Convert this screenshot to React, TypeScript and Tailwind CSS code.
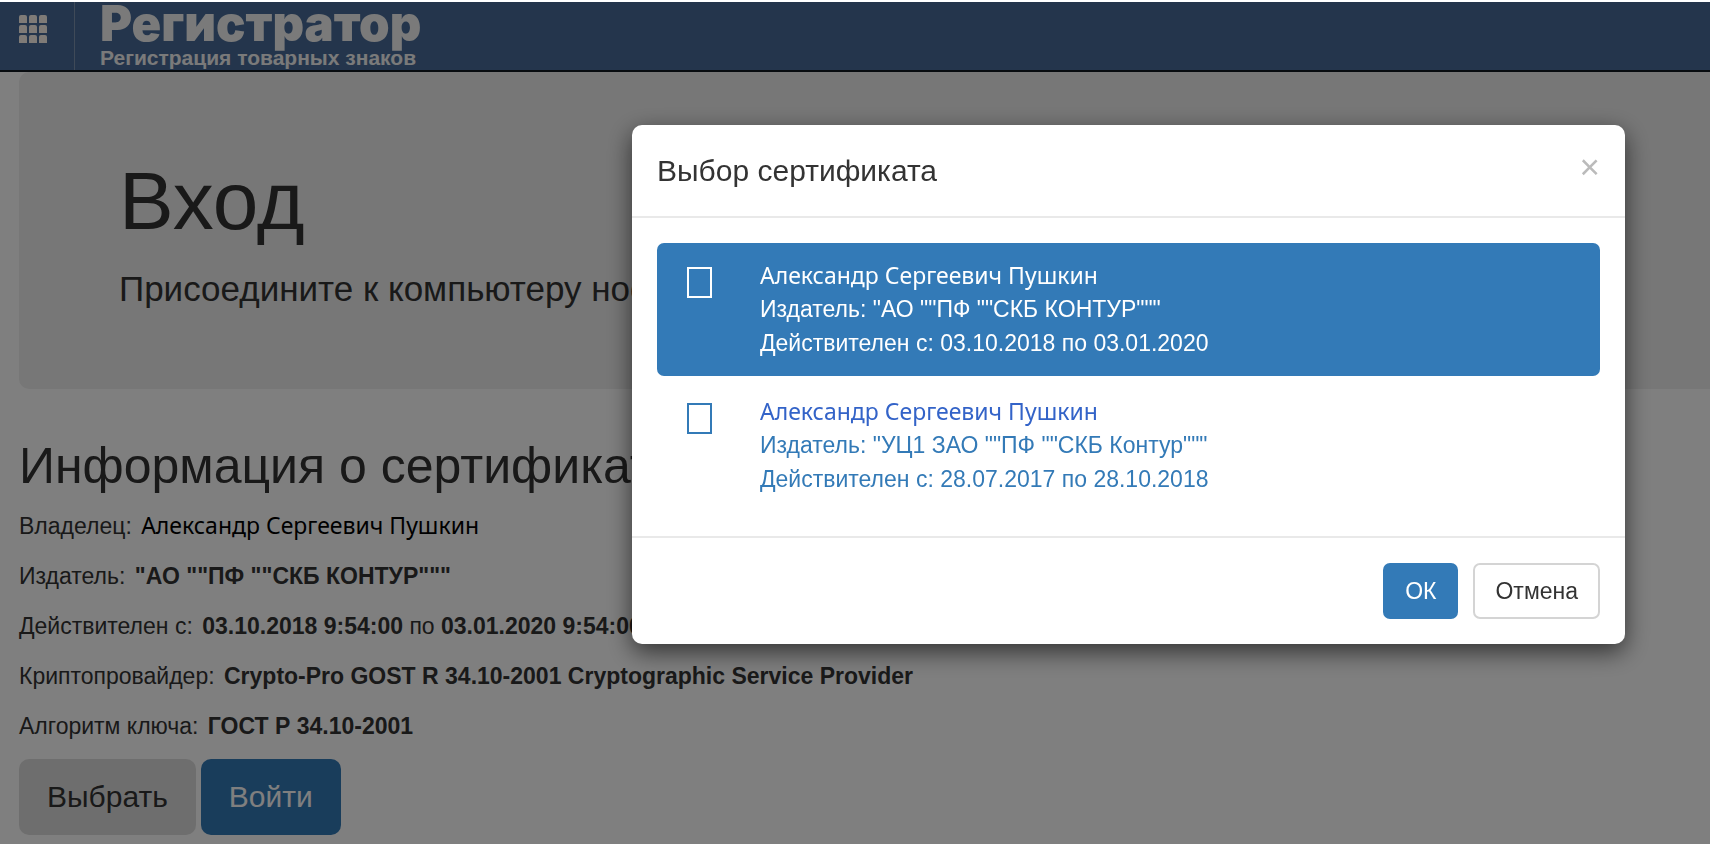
import React from 'react';

interface Certificate {
  id: number;
  owner: string;
  issuer: string;
  from: string;
  to: string;
}

const certificates: Certificate[] = [
  { id: 1, owner: 'Александр Сергеевич Пушкин', issuer: '"АО ""ПФ ""СКБ КОНТУР"""', from: '03.10.2018', to: '03.01.2020' },
  { id: 2, owner: 'Александр Сергеевич Пушкин', issuer: '"УЦ1 ЗАО ""ПФ ""СКБ Контур"""', from: '28.07.2017', to: '28.10.2018' },
];

const GridIcon: React.FC = (): JSX.Element => (
  <svg viewBox="0 0 28 28" className="w-7 h-7" fill="#fff6ee">
    {[0, 10, 20].map((y) =>
      [0, 10, 20].map((x) => (
        <path key={`${x}-${y}`} d={`M${x} ${y + 8}v-6q0-2 2-2h4q2 0 2 2v6z`} />
      ))
    )}
  </svg>
);

const Header: React.FC = (): JSX.Element => (
  <header className="flex h-[70px] mt-[2px] border-b-2 border-[#101820] bg-[#486b98]">
    <button type="button" aria-label="Меню" className="w-[75px] shrink-0 pl-[19px] pt-[13px] flex items-start border-r border-[#7f95b0]">
      <GridIcon />
    </button>
    <a href="#" className="flex flex-col pl-[25px] text-[#f4f4f4] font-bold">
      <span className="font-[Inter,sans-serif] text-[49px] leading-[44px] font-black">Регистратор</span>
      <span className="text-[21px] leading-[24px]">Регистрация товарных знаков</span>
    </a>
  </header>
);

const CertificateDialog: React.FC = (): JSX.Element => {
  const [selected, setSelected] = React.useState<number>(1);

  return (
    <div className="fixed inset-x-0 bottom-0 top-[2px] bg-black/50">
      <div
        role="dialog"
        aria-labelledby="dialog-title"
        className="w-[993px] ml-auto mr-[85px] mt-[123px] rounded-[10px] bg-white shadow-[0_8px_25px_rgba(0,0,0,0.6)]"
      >
        <div className="flex items-start justify-between px-[25px] pt-[24px] h-[93px] border-b-2 border-[#e9e9e9]">
          <h4 id="dialog-title" className="text-[30px] leading-[43px]">Выбор сертификата</h4>
          <button type="button" aria-label="Закрыть" className="text-[35px] leading-[35px] text-[#bbbbbb]">×</button>
        </div>
        <div className="px-[25px] pt-[25px] pb-[24px] flex flex-col gap-[3px]">
          {certificates.map((c) => {
            const active = c.id === selected;
            return (
              <button
                key={c.id}
                type="button"
                onClick={() => setSelected(c.id)}
                className={`flex items-start text-left pl-[30px] pt-[15px] pb-[16px] rounded-[7px] ${active ? 'bg-[#337ab7] text-white' : 'text-[#337ab7]'}`}
              >
                <svg viewBox="0 0 25 31" className="w-[25px] h-[31px] mt-[9px] mr-[48px]" fill="none" stroke="currentColor" strokeWidth="2">
                  <rect x="1" y="1" width="23" height="29" />
                </svg>
                <span className="text-[23px] leading-[34px]">
                  <span className={`block font-['Noto_Sans',sans-serif] ${active ? '' : 'text-[#3363c8]'}`}>{c.owner}</span>
                  <span className="block">Издатель: {c.issuer}</span>
                  <span className="block">Действителен с: {c.from} по {c.to}</span>
                </span>
              </button>
            );
          })}
        </div>
        <div className="flex justify-end gap-[15px] p-[25px] border-t-2 border-[#e9e9e9] text-[23px] leading-[33px]">
          <button type="button" className="h-14 px-[22px] rounded-[7px] bg-[#337ab7] text-white">ОК</button>
          <button type="button" className="h-14 px-5 rounded-[7px] border-2 border-[#d4d4d4] bg-white">Отмена</button>
        </div>
      </div>
    </div>
  );
};

const App: React.FC = (): JSX.Element => {
  return (
    <div className="min-h-screen flex flex-col bg-white text-[#333333] font-['Liberation_Sans',Arial,sans-serif]">
      <Header />
      <main className="pl-[19px]">
        <section className="bg-[#eeeeee] rounded-l-[10px] h-[317px] pl-[100px] pt-[83px]">
          <h1 className="text-[82px] leading-[92px]">Вход</h1>
          <p className="mt-[17px] text-[35px] leading-[50px] whitespace-nowrap">Присоедините к компьютеру носитель</p>
        </section>
        <h2 className="mt-[50px] text-[50px] leading-[55px] whitespace-nowrap">Информация о сертификате</h2>
        <div className="mt-[15px] flex flex-col gap-[17px] text-[23px] leading-[33px] whitespace-nowrap">
          <p>Владелец: <span className="ml-[3px] font-['Noto_Sans',sans-serif] text-black">Александр Сергеевич Пушкин</span></p>
          <p>Издатель: <b className="ml-[3px]">"АО ""ПФ ""СКБ КОНТУР"""</b></p>
          <p>Действителен с: <b className="ml-[3px]">03.10.2018 9:54:00</b> по <b>03.01.2020 9:54:00</b></p>
          <p>Криптопровайдер: <b className="ml-[3px]">Crypto-Pro GOST R 34.10-2001 Cryptographic Service Provider</b></p>
          <p>Алгоритм ключа: <b className="ml-[3px]">ГОСТ Р 34.10-2001</b></p>
        </div>
        <div className="mt-[16px] flex gap-[5px] text-[30px] leading-[40px]">
          <button type="button" className="h-[76px] px-[28px] rounded-[10px] bg-[#dddddd]">Выбрать</button>
          <button type="button" className="h-[76px] px-[28px] rounded-[10px] bg-[#337ab7] text-white">Войти</button>
        </div>
      </main>
      <CertificateDialog />
    </div>
  );
};

export default App;
